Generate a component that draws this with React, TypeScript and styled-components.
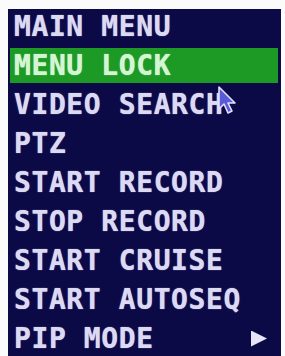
import React from "react";
import styled, { createGlobalStyle } from "styled-components";

const Global = createGlobalStyle`
  html, body { margin: 0; padding: 0; background: #fbfbfb; }
  body { width: 285px; height: 356px; overflow: hidden; }
`;

const Panel = styled.div`
  position: relative;
  margin: 9px 0 0 8px;
  width: 273px;
  height: 347px;
  background: #0b0a47;
  display: flex;
  flex-direction: column;
  font-family: "DejaVu Sans Mono", "Liberation Mono", monospace;
  font-weight: bold;
  font-size: 28px;
  letter-spacing: 0.6px;
  overflow: hidden;
`;

const Row = styled.div`
  height: 39px;
  flex: none;
  padding: 0 3px 0 2px;
`;

const Bar = styled.div<{ $active?: boolean }>`
  height: 35px;
  display: flex;
  align-items: center;
  justify-content: space-between;
  padding: 0 11px 0 4px;
  background: ${(p) => (p.$active ? "#1d9a26" : "transparent")};
  color: ${(p) => (p.$active ? "#d4f5d2" : "#dcdaf2")};
  text-shadow: 0 0 1px ${(p) => (p.$active ? "#d4f5d2" : "#c8c6ea")};
  white-space: pre;
  line-height: 1;
`;

const Arrow = styled.span`
  width: 16px;
  height: 16px;
  background: #e6e6f8;
  clip-path: polygon(0 0, 100% 50%, 0 100%);
  filter: blur(0.5px);
`;

const Pointer = styled.svg`
  position: absolute;
  left: 209px;
  top: 76px;
  width: 22px;
  height: 30px;
  filter: blur(0.6px);
`;

const items = [
  "MAIN MENU",
  "MENU LOCK",
  "VIDEO SEARCH",
  "PTZ",
  "START RECORD",
  "STOP RECORD",
  "START CRUISE",
  "START AUTOSEQ",
  "PIP MODE",
];

export default function App() {
  return (
    <>
      <Global />
      <Panel>
        {items.map((t, i) => (
          <Row key={t}>
            <Bar $active={i === 1}>
              <span>{t}</span>
              {t === "PIP MODE" && <Arrow />}
            </Bar>
          </Row>
        ))}
        <Pointer viewBox="0 0 22 30">
          <path
            d="M2 2 L2 24 L7 19 L11 28 L15 26 L11 18 L18 18 Z"
            fill="#5a5ad8"
            stroke="#dfe2ff"
            strokeWidth="1.6"
            strokeLinejoin="round"
          />
        </Pointer>
      </Panel>
    </>
  );
}
